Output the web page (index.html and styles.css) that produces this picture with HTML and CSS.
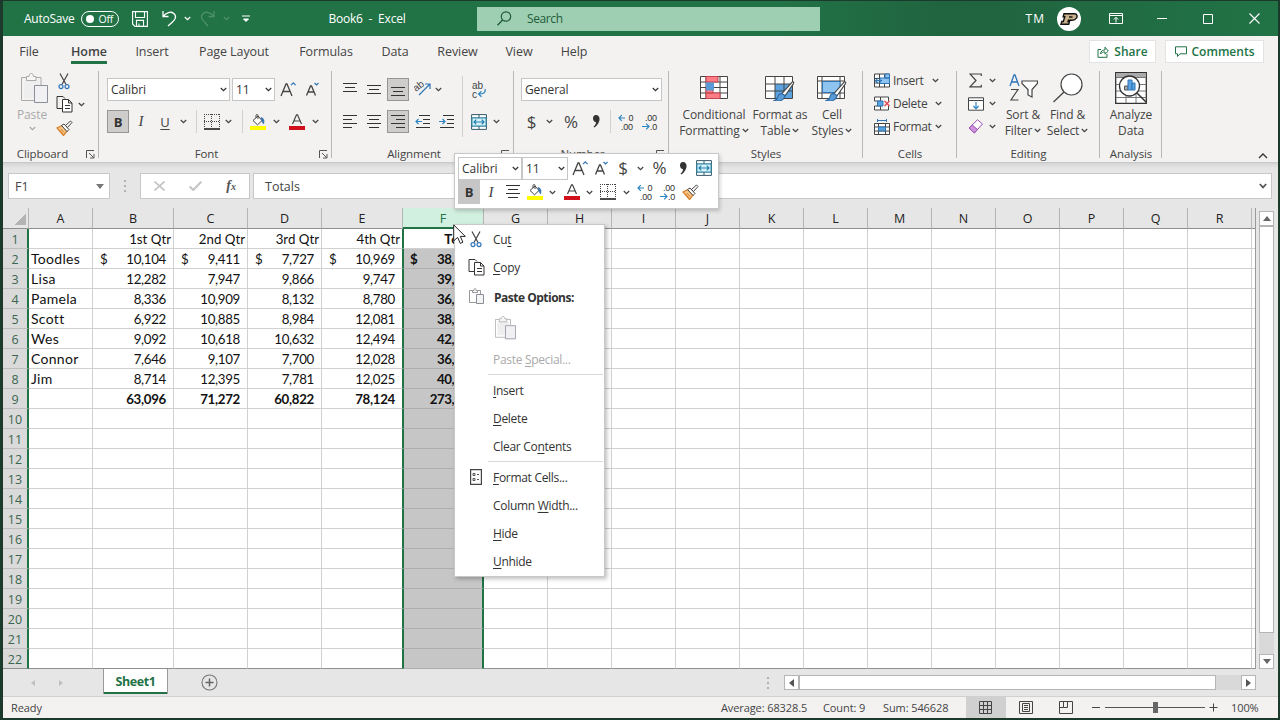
FILE: index.html
```
<!DOCTYPE html>
<html lang="en">
<head>
    <meta charset="UTF-8">
    <meta name="viewport" content="width=device-width, initial-scale=1.0">
    <title>Book6 - Excel</title>
    <link rel="stylesheet" href="styles.css">
</head>
<body>
    <!-- shared icons -->
    <svg class="sprite" width="0" height="0">
        <symbol id="chev" viewBox="0 0 7 5"><path d="M.8 1l2.7 2.6L6.2 1" fill="none" stroke="currentColor" stroke-width="1.3"/></symbol>
        <symbol id="cut" viewBox="0 0 12 17"><path d="M2 .5l6 11M10 .5l-6 11" fill="none" stroke="#444" stroke-width="1.2"/><circle cx="3" cy="13.6" r="2" fill="none" stroke="#2e75b6" stroke-width="1.2"/><circle cx="9" cy="13.6" r="2" fill="none" stroke="#2e75b6" stroke-width="1.2"/></symbol>
        <symbol id="copy" viewBox="0 0 17 17"><path d="M6 12.500H1V.5h6l2 2" fill="none" stroke="#333"/><path d="M6.500 3.500h6l3.500 3.500v9H6.500zM12.500 3.500V7H16M9 9.500h5M9 12.500h5" fill="#fff" stroke="#333"/></symbol>
        <symbol id="paste" viewBox="0 0 27 31"><path d="M13 27.500H.5V4.500h5M15 4.500h5V12" fill="none" stroke="#aaa"/><path d="M3 25h10V12h5V7H3z" fill="#eee"/><path d="M5.500 7.500v-4H8c0-4 4.500-4 4.500 0H15v4z" fill="#f6f6f6" stroke="#aaa"/><path d="M13.500 12.500h13v17h-13z" fill="#f1f1f4" stroke="#8a8f9a"/></symbol>
        <symbol id="paste-small" viewBox="0 0 15 17"><path d="M7 14.500H.5V2.500h3M8.500 2.500h3V6M3.500 4.500v-2h1.500c0-2.700 2-2.700 2 0h1.500v2z" fill="none" stroke="#999"/><path d="M7.500 6.500h7v9h-7z" fill="#f4f4f4" stroke="#8a8f9a"/></symbol>
        <symbol id="painter" viewBox="0 0 17 16"><path d="M1 8l5-2.500 5 5.500-3.500 4.500z" fill="#f7c78c" stroke="#d9822b" stroke-width="1.300"/><path d="M3 9.500l3.500 4M5 9l3 3.500" stroke="#d9822b"/><path d="M5.500 5.500L8 4l5 5.500-2 2z" fill="#fff" stroke="#444"/><path d="M9.500 5.500l5-4.500 1.500 1.500-4.500 5z" fill="#fff" stroke="#444"/></symbol>
        <symbol id="borders" viewBox="0 0 16 16"><path d="M0 .5h16M0 7.500h16M.5 0v14M7.500 0v14M15.500 0v14" fill="none" stroke="#444" stroke-dasharray="1 1"/><path d="M0 15h16" stroke="#111" stroke-width="1.500"/></symbol>
        <symbol id="fill" viewBox="0 0 17 16"><path d="M3 6.500L8 2l4 4.500-4.500 4.300z" fill="#fff" stroke="#444"/><path d="M6 4V1.500c0-1.300 2-1.300 2 0V5" fill="none" stroke="#444"/><path d="M11 3.500c3 .5 3.500 3.500 2.500 6.500-1.500-2-1.700-3.500-2.500-6.500z" fill="#2e75b6" stroke="#2e6a9e" stroke-width=".6"/><path d="M0 12h16v4H0z" fill="#ffff00"/></symbol>
        <symbol id="fontcolor" viewBox="0 0 16 16"><path d="M3.500 10L7.500.8h1L12.500 10M5 7h6" fill="none" stroke="#444" stroke-width="1.200"/><path d="M0 12h16v4H0z" fill="#d0111b"/></symbol>
        <symbol id="grow" viewBox="0 0 17 17"><path d="M1 15L6 3h1l5 12M3 10.500h7" fill="none" stroke="#444" stroke-width="1.300"/><path d="M11 4.200l2.300-2.400 2.300 2.400" fill="none" stroke="#2e75b6" stroke-width="1.200"/></symbol>
        <symbol id="shrink" viewBox="0 0 16 17"><path d="M1.500 14.500l4-9.500h1l4 9.500M3 11h6" fill="none" stroke="#444" stroke-width="1.300"/><path d="M9.500 2l2 2 2-2" fill="none" stroke="#2e75b6" stroke-width="1.200"/></symbol>
        <symbol id="lines-c" viewBox="0 0 14 14"><path d="M0 .5h14M2 4.500h10M0 8.500h14M2 12.500h10" stroke="#333"/></symbol>
        <symbol id="merge" viewBox="0 0 16 16"><path d="M.6.6h14.800v14.800H.6zM.6 4h14.800M.6 12h14.800M8 .6V4M8 12v3.400" fill="#fff" stroke="#345a6b"/><path d="M1 4h14v8H1z" fill="#d9f0f8" stroke="#2a8fae"/><path d="M3 8h10M5.300 5.700L3 8l2.300 2.300M10.700 5.700L13 8l-2.300 2.300" fill="none" stroke="#1b7fae" stroke-width="1.200"/></symbol>
        <symbol id="inc-dec" viewBox="0 0 16 18"><path d="M7 5H1M3.800 2.200L1 5l2.800 2.800" fill="none" stroke="#2e85c0" stroke-width="1.200"/><text x="10.500" y="8" class="tiny">0</text><text x="3" y="17" class="tiny">.00</text></symbol>
        <symbol id="dec-dec" viewBox="0 0 16 18"><path d="M0 13.500h7M4.200 10.700L7 13.500l-2.800 2.800" fill="none" stroke="#2e85c0" stroke-width="1.200"/><text x="3" y="8" class="tiny">.00</text><text x="8" y="17" class="tiny">.0</text></symbol>
        <symbol id="comma" viewBox="0 0 8 13"><path d="M4 0c5 0 5 8-1.500 12.500L1.500 11.500C3.500 10 4 8.500 4 7.200.5 7.200-.5.2 4 0z" fill="#333"/></symbol>
        <symbol id="launch" viewBox="0 0 9 9"><path d="M.5 8V.5H8M3 3l4.500 4.500M8 4v4H4" fill="none" stroke="#555"/></symbol>
        <symbol id="brush" viewBox="0 0 20 20"><path d="M8 12L18 .8c1.500-.3 1.500.7 1 1.700L11 14z" fill="#fff" stroke="#444"/><path d="M8 12c-2.500 0-3.500 1.500-4 3.500-.3 1.500-1.500 2.500-3.500 3 4 1.500 9.500.5 10.500-4.500z" fill="#5b9bd5" stroke="#2e6aa8"/></symbol>
    </svg>

    <div class="window">
        <div class="titlebar">
            <div class="quick">
                <span>AutoSave</span>
                <span class="toggle"><i></i>Off</span>
                <svg width="16" height="16"><path d="M.6.6h14.800v14.800H3L.6 13zM3.500.6v5.900h9V.6M4.500 15.400v-6h7v6M7 15v-2.500" fill="none" stroke="#fff" stroke-width="1.100"/></svg>
                <svg width="15" height="17"><path d="M1 1v5.500h5.500M1.300 6.200C4 2.500 9 1 11.800 3.500c3.500 3 1 6.500-1.300 8.500L6 16" fill="none" stroke="#fff" stroke-width="1.300"/></svg>
                <svg width="7" height="5"><use href="#chev"/></svg>
                <svg class="faint" width="15" height="17"><path d="M14 1v5.500H8.500M13.700 6.200C11 2.500 6 1 3.200 3.500c-3.500 3-1 6.500 1.300 8.500L8 16" fill="none" stroke="#fff" stroke-width="1.300"/></svg>
                <svg class="faint" width="7" height="5"><use href="#chev"/></svg>
                <svg width="8" height="8"><path d="M0 1h8M1.500 4L4 6.500 6.500 4z" fill="#fff" stroke="#fff"/></svg>
            </div>
            <div class="doc-name">Book6&nbsp; -&nbsp; Excel</div>
            <div class="search">
                <svg width="15" height="15"><circle cx="9" cy="5.500" r="4.700" fill="none" stroke="#1e5c3a" stroke-width="1.200"/><path d="M5.600 9L.5 14.300" stroke="#1e5c3a" stroke-width="1.300"/></svg>
                <span>Search</span>
            </div>
            <div class="controls">
                <span class="initials">TM</span>
                <span class="avatar"><svg width="18" height="12"><path d="M4 .8h10.500c3 0 3 2.700 2 4.200-1 1.700-2.500 2.200-4.500 2.200H8.500L8 8.500h1.500l-.8 2.700H1l.8-2.700h1.500l1.500-4.700H3.200z" fill="#c9b18c" stroke="#111" stroke-width="1.400"/><path d="M9 4h3.500" stroke="#111" stroke-width="1.400"/></svg></span>
                <svg width="14" height="11"><path d="M.5.500h13v10H.5zM.5 2.500h13M7 9.500v-5M4.800 6.500L7 4.300l2.200 2.200" fill="none" stroke="#fff"/></svg>
                <svg width="10" height="11"><path d="M0 5.500h10" stroke="#fff"/></svg>
                <svg width="10" height="10"><path d="M.5.500h9v9H.5z" fill="none" stroke="#fff"/></svg>
                <svg width="11" height="11"><path d="M.5.500l10 10M10.500.5l-10 10" stroke="#fff" stroke-width="1.100"/></svg>
            </div>
        </div>

        <div class="tabs">
            <span>File</span>
            <span class="active">Home</span>
            <span>Insert</span>
            <span>Page Layout</span>
            <span>Formulas</span>
            <span>Data</span>
            <span>Review</span>
            <span>View</span>
            <span>Help</span>
            <button class="share"><svg width="12" height="12"><path d="M4 3.500H1v7.800h9V8" fill="none" stroke="#217346"/><path d="M3.500 8c.3-3 2-4 4.500-4V1.200L11.300 5 8 8.200V6C6 6 4.700 6.500 3.500 8z" fill="none" stroke="#217346"/></svg>Share</button>
            <button class="comments"><svg width="12" height="12"><path d="M.5.800h11v7H5L2.500 10.500V7.800h-2z" fill="none" stroke="#217346"/></svg>Comments</button>
        </div>

        <div class="ribbon">
            <div class="group clipboard">
                <div class="body">
                    <div class="paste-btn">
                        <svg width="27" height="31"><use href="#paste"/></svg>
                        <span>Paste</span>
                        <svg width="7" height="5"><use href="#chev"/></svg>
                    </div>
                    <div class="clip-tools">
                        <svg width="12" height="17"><use href="#cut"/></svg><i></i>
                        <svg width="17" height="17"><use href="#copy"/></svg><svg width="7" height="5"><use href="#chev"/></svg>
                        <svg width="17" height="16"><use href="#painter"/></svg><i></i>
                    </div>
                </div>
                <div class="label">Clipboard<svg class="launch" width="9" height="9"><use href="#launch"/></svg></div>
            </div>

            <div class="group font">
                <div class="body rows">
                    <div class="font-row1">
                        <div class="select">Calibri<svg width="7" height="5"><use href="#chev"/></svg></div>
                        <div class="select size">11<svg width="7" height="5"><use href="#chev"/></svg></div>
                        <svg width="17" height="17"><use href="#grow"/></svg>
                        <svg width="16" height="17"><use href="#shrink"/></svg>
                    </div>
                    <div class="font-row2">
                        <span class="on bold">B</span>
                        <span class="italic">I</span>
                        <span class="under">U</span>
                        <svg width="7" height="5"><use href="#chev"/></svg>
                        <i class="sep"></i>
                        <svg width="16" height="16"><use href="#borders"/></svg>
                        <svg width="7" height="5"><use href="#chev"/></svg>
                        <i class="sep"></i>
                        <svg width="17" height="16"><use href="#fill"/></svg>
                        <svg width="7" height="5"><use href="#chev"/></svg>
                        <svg width="16" height="16"><use href="#fontcolor"/></svg>
                        <svg width="7" height="5"><use href="#chev"/></svg>
                    </div>
                </div>
                <div class="label">Font<svg class="launch" width="9" height="9"><use href="#launch"/></svg></div>
            </div>

            <div class="group align">
                <div class="body">
                    <div class="align-left">
                        <svg class="up" width="14" height="10"><path d="M0 .5h14M2 4.500h10M0 8.500h14" stroke="#333"/></svg>
                        <svg width="14" height="10"><path d="M0 .5h14M2 4.500h10M0 8.500h14" stroke="#333"/></svg>
                        <span class="on low"><svg width="14" height="10"><path d="M0 .5h14M2 4.500h10M0 8.500h14" stroke="#333"/></svg></span>
                        <svg class="up" width="17" height="17"><text x="0" y="11" class="ab" transform="rotate(-38 4 9)">ab</text><path d="M5 16L15.500 5.500M11 5h5v5" fill="none" stroke="#2e75b6" stroke-width="1.200"/></svg>
                        <svg width="7" height="5"><use href="#chev"/></svg>
                        <svg width="14" height="14"><path d="M0 .5h14M0 4.500h9M0 8.500h14M0 12.500h9" stroke="#333"/></svg>
                        <svg width="14" height="14"><use href="#lines-c"/></svg>
                        <span class="on"><svg width="14" height="14"><path d="M0 .5h14M5 4.500h9M0 8.500h14M5 12.500h9" stroke="#333"/></svg></span>
                        <svg width="15" height="14"><path d="M4 .5h11M8 4.500h7M8 8.500h7M1 12.500h14" stroke="#333"/><path d="M7 6.500H1M3.500 4L1 6.500 3.500 9" fill="none" stroke="#2e85c0" stroke-width="1.200"/></svg>
                        <svg class="wide" width="15" height="14"><path d="M4 .5h11M8 4.500h7M8 8.500h7M1 12.500h14" stroke="#333"/><path d="M0 6.500h6M3.500 4L6 6.500 3.500 9" fill="none" stroke="#2e85c0" stroke-width="1.200"/></svg>
                    </div>
                    <i class="sep tall"></i>
                    <div class="align-right">
                        <svg width="16" height="20"><text x="1" y="9" class="ab">ab</text><text x="1" y="18" class="ab">c</text><path d="M14 9c1 4-2 5-6 5M10.500 11.300L7.500 14l3 2.800" fill="none" stroke="#2e85c0" stroke-width="1.200"/></svg><i></i>
                        <svg width="16" height="16"><use href="#merge"/></svg>
                        <svg width="7" height="5"><use href="#chev"/></svg>
                    </div>
                </div>
                <div class="label">Alignment<svg class="launch" width="9" height="9"><use href="#launch"/></svg></div>
            </div>

            <div class="group number">
                <div class="body rows">
                    <div class="select">General<svg width="7" height="5"><use href="#chev"/></svg></div>
                    <div class="number-row2">
                        <span class="sym">$</span>
                        <svg width="7" height="5"><use href="#chev"/></svg>
                        <span class="sym">%</span>
                        <svg width="8" height="13"><use href="#comma"/></svg>
                        <i class="sep"></i>
                        <svg width="16" height="18"><use href="#inc-dec"/></svg>
                        <svg width="16" height="18"><use href="#dec-dec"/></svg>
                    </div>
                </div>
                <div class="label">Number<svg class="launch" width="9" height="9"><use href="#launch"/></svg></div>
            </div>

            <div class="group styles">
                <div class="body">
                    <div class="big">
                        <svg width="28" height="28"><path d="M.5 3.500h27v22H.5zM.5 9h27M.5 14.500h27M.5 20h27M6 3.500v22M20 3.500v22" fill="#fff" stroke="#444"/><path d="M6 3.500h12V9H6zM6 20h14v5.500H6zM6 14.500h7V20H6z" fill="#ff7b85" stroke="#c4464f"/><path d="M6 9.500h8v8H6z" fill="#5b9bd5"/></svg>
                        <span>Conditional</span>
                        <span>Formatting <svg width="7" height="5"><use href="#chev"/></svg></span>
                    </div>
                    <div class="big">
                        <svg width="30" height="28"><path d="M.5 3.500h27v22H.5z" fill="#fff"/><path d="M10 11h18v14H10z" fill="#5ba3e0"/><path d="M.5 3.500h27v22H.5zM.5 11h27M.5 18h27M10 3.500v22M19 3.500v22" fill="none" stroke="#444"/><use href="#brush" x="8" y="8" width="22" height="21"/></svg>
                        <span>Format as</span>
                        <span>Table <svg width="7" height="5"><use href="#chev"/></svg></span>
                    </div>
                    <div class="big">
                        <svg width="30" height="28"><path d="M.5 3.500h27v22H.5zM.5 8h27M.5 20h27M5 3.500v22M23 3.500v22" fill="#fff" stroke="#444"/><path d="M5.500 8.500h17.500v11H5.500z" fill="#8fc3f0" stroke="#2e75b6"/><use href="#brush" x="8" y="8" width="22" height="21"/></svg>
                        <span>Cell</span>
                        <span>Styles <svg width="7" height="5"><use href="#chev"/></svg></span>
                    </div>
                </div>
                <div class="label">Styles</div>
            </div>

            <div class="group cells">
                <div class="body list">
                    <div><svg width="16" height="15"><path d="M.5 1h15v13H.5zM.5 5.500h15M.5 10h15M5.500 1v13M10.500 1v13" fill="#fff" stroke="#444"/><path d="M6 5h9.500v5.500H6zM11 1h4.500v4H11z" fill="#8fc3f0" stroke="#2e75b6"/><path d="M8 7.700H1.500M4 5L1.500 7.700 4 10.400" fill="none" stroke="#2e75b6" stroke-width="1.200"/></svg><span>Insert</span><svg class="gap" width="7" height="5"><use href="#chev"/></svg></div>
                    <div><svg width="16" height="15"><path d="M.5 1h6v4h-6zM6.500 1h8v4M.5 10h6v4h-6zM6.500 14h8v-4" fill="#fff" stroke="#444"/><path d="M3.500 5h5.500v5H3.500z" fill="#5ba3e0" stroke="#2e75b6"/><path d="M10.500 5l5 5M15.500 5l-5 5" stroke="#e0444c" stroke-width="1.300"/></svg><span>Delete</span><svg class="gap" width="7" height="5"><use href="#chev"/></svg></div>
                    <div><svg width="16" height="16"><path d="M.5 4.500h15v11H.5zM.5 8h15M.5 12h15M4.500 4.500v11M11.500 4.500v11" fill="#fff" stroke="#444"/><path d="M4.500 8h7v4h-7z" fill="#5ba3e0" stroke="#2e75b6"/><path d="M3.500 0v3M12.500 0v3M3.500 1.500h9" stroke="#2e75b6"/></svg><span>Format</span><svg width="7" height="5"><use href="#chev"/></svg></div>
                </div>
                <div class="label">Cells</div>
            </div>

            <div class="group editing">
                <div class="body">
                    <div class="edit-tools">
                        <svg width="13" height="15"><path d="M12.300 3V1H1l6 6.500L1 13.800h11.300v-2" fill="none" stroke="#444" stroke-width="1.200"/></svg><svg width="7" height="5"><use href="#chev"/></svg>
                        <svg width="16" height="14"><path d="M.5.800h15v12.400H.5zM.5 3.500h15" fill="#fff" stroke="#444"/><path d="M8 5v6.500M5.300 9L8 11.600 10.700 9" fill="none" stroke="#2e85c0" stroke-width="1.200"/></svg><svg width="7" height="5"><use href="#chev"/></svg>
                        <svg width="16" height="15"><path d="M1 9L9.500.8l5 4.200L6.300 14z" fill="#fff" stroke="#9b4fb0"/><path d="M1 9l3.200-3 5.300 4.500L6.300 14z" fill="#cf93dd" stroke="#9b4fb0"/></svg><svg width="7" height="5"><use href="#chev"/></svg>
                    </div>
                    <div class="big sort">
                        <svg width="29" height="30"><path d="M1 13L5 2h1l4 11M2.500 9h6" fill="none" stroke="#2e75b6" stroke-width="1.300"/><path d="M2 16.500h7L2 27h7.500" fill="none" stroke="#444" stroke-width="1.200"/><path d="M13 8h15.500v2.500L23 16.500V24l-4-2v-5.500l-6-6z" fill="#fff" stroke="#444" stroke-width="1.200"/></svg>
                        <span>Sort &amp;</span>
                        <span>Filter <svg width="7" height="5"><use href="#chev"/></svg></span>
                    </div>
                    <div class="big find">
                        <svg width="30" height="30"><circle cx="18.500" cy="11.500" r="10.500" fill="#fff" stroke="#444" stroke-width="1.200"/><path d="M11 19L.5 29" stroke="#444" stroke-width="1.300"/></svg>
                        <span>Find &amp;</span>
                        <span>Select <svg width="7" height="5"><use href="#chev"/></svg></span>
                    </div>
                </div>
                <div class="label">Editing</div>
            </div>

            <div class="group analysis">
                <div class="body">
                    <div class="big">
                        <svg width="32" height="32"><path d="M.7.700h30.600v30.600H.7z" fill="#fff" stroke="#333" stroke-width="1.300"/><path d="M1 1h30v4H1z" fill="#aaa"/><path d="M1 5.500h30M1 12.500h30M1 19h30M1 25.500h30M11 19v12M21 19v12" stroke="#777"/><circle cx="14.500" cy="14" r="10" fill="#fff" stroke="#333" stroke-width="1.300"/><path d="M22 21l9 9" stroke="#333" stroke-width="1.500"/><path d="M9.500 14h3.500v4H9.500z" fill="#aaa" stroke="#555"/><path d="M13 8h4v10h-4z" fill="#5ba3e0" stroke="#2e75b6"/><path d="M17 11h3v7h-3z" fill="#5ba3e0" stroke="#2e75b6"/></svg>
                        <span>Analyze</span>
                        <span>Data</span>
                    </div>
                </div>
                <div class="label">Analysis</div>
            </div>

            <svg class="collapse" width="10" height="6"><path d="M1 5l4-4 4 4" fill="none" stroke="#333" stroke-width="1.300"/></svg>
        </div>

        <div class="formula-bar">
            <div class="name-box">F1<svg width="8" height="5"><path d="M0 0h8L4 5z" fill="#777"/></svg></div>
            <i class="dots"></i>
            <div class="fx-box">
                <svg width="11" height="10"><path d="M.5.500l10 9M10.500.5l-10 9" stroke="#c3c3c3" stroke-width="1.600"/></svg>
                <svg width="13" height="10"><path d="M.7 5.500l3.500 3.500L12.300.8" fill="none" stroke="#c3c3c3" stroke-width="2"/></svg>
                <span class="fx">f<small>x</small></span>
            </div>
            <div class="formula">Totals<svg width="8" height="6"><path d="M.8 1L4 4.400 7.200 1" fill="none" stroke="#555" stroke-width="1.700"/></svg></div>
        </div>

        <div class="sheet">
            <table class="grid">
                <thead><tr id="cols"></tr></thead>
                <tbody id="rows"></tbody>
            </table>
            <div class="vscroll">
                <span class="arrow"><svg width="8" height="5"><path d="M0 5h8L4 0z" fill="#666"/></svg></span>
                <span class="thumb"></span>
                <span class="arrow"><svg width="8" height="5"><path d="M0 0h8L4 5z" fill="#666"/></svg></span>
            </div>
        </div>

        <div class="sheet-tabs">
            <svg width="4" height="6"><path d="M4 0v6L0 3z" fill="#c0c0c0"/></svg>
            <svg width="4" height="6"><path d="M0 0v6l4-3z" fill="#c0c0c0"/></svg>
            <span class="sheet-tab">Sheet1</span>
            <svg width="17" height="17"><circle cx="8.500" cy="8.500" r="7.500" fill="none" stroke="#777" stroke-width="1.100"/><path d="M4.500 8.500h8M8.500 4.500v8" stroke="#666" stroke-width="1.500"/></svg>
            <i class="dots"></i>
            <div class="hscroll">
                <span class="arrow"><svg width="5" height="8"><path d="M5 0v8L0 4z" fill="#555"/></svg></span>
                <span class="thumb"></span>
                <span class="arrow"><svg width="5" height="8"><path d="M0 0v8l5-4z" fill="#555"/></svg></span>
            </div>
        </div>

        <div class="status">
            <span class="ready">Ready</span>
            <span class="avg">Average: 68328.5</span>
            <span class="count">Count: 9</span>
            <span class="sum">Sum: 546628</span>
            <span class="view current"><svg width="13" height="13"><path d="M.5.500h12v12H.5zM.5 4.500h12M.5 8.500h12M4.500.5v12M8.500.5v12" fill="none" stroke="#444"/></svg></span>
            <span class="view"><svg width="14" height="13"><path d="M.5.500h13v12H.5zM3.500 2.500h7v8h-7zM5 4.500h4M5 6.500h4M5 8.500h4" fill="none" stroke="#444"/></svg></span>
            <span class="view"><svg width="14" height="13"><path d="M.5.500h13v12H.5zM4.500.5v6h-4M4.500 6.500h4v-6" fill="none" stroke="#444"/></svg></span>
            <svg class="minus" width="9" height="9"><path d="M0 4.500h8" stroke="#444"/></svg>
            <span class="slider"><i></i></span>
            <svg class="plus" width="9" height="9"><path d="M.5 4.500h8M4.500.5v8" stroke="#444"/></svg>
            <span class="zoom">100%</span>
        </div>

        <div class="mini">
            <div class="mini-row1">
                <div class="select">Calibri<svg width="7" height="5"><use href="#chev"/></svg></div>
                <div class="select">11<svg width="7" height="5"><use href="#chev"/></svg></div>
                <svg width="17" height="17"><use href="#grow"/></svg>
                <svg width="16" height="17"><use href="#shrink"/></svg>
                <span class="sym">$</span>
                <svg width="7" height="5"><use href="#chev"/></svg>
                <span class="sym">%</span>
                <svg width="8" height="13"><use href="#comma"/></svg>
                <svg width="16" height="16"><use href="#merge"/></svg>
            </div>
            <div class="mini-row2">
                <span class="on bold">B</span>
                <span class="italic">I</span>
                <svg width="14" height="14"><use href="#lines-c"/></svg>
                <svg width="17" height="16"><use href="#fill"/></svg>
                <svg width="7" height="5"><use href="#chev"/></svg>
                <svg width="16" height="16"><use href="#fontcolor"/></svg>
                <svg width="7" height="5"><use href="#chev"/></svg>
                <svg width="16" height="16"><use href="#borders"/></svg>
                <svg width="7" height="5"><use href="#chev"/></svg>
                <svg width="16" height="18"><use href="#inc-dec"/></svg>
                <svg width="16" height="18"><use href="#dec-dec"/></svg>
                <svg width="17" height="16"><use href="#painter"/></svg>
            </div>
        </div>

        <div class="menu">
            <div class="item"><svg width="12" height="17"><use href="#cut"/></svg><span>Cu<u>t</u></span></div>
            <div class="item"><svg width="17" height="17"><use href="#copy"/></svg><span><u>C</u>opy</span></div>
            <div class="item head"><svg width="15" height="17"><use href="#paste-small"/></svg><b>Paste Options:</b></div>
            <div class="item paste-icon"><i></i><svg width="21" height="24"><use href="#paste"/></svg></div>
            <div class="item off"><i></i><span>Paste <u>S</u>pecial...</span></div>
            <div class="line"></div>
            <div class="item"><i></i><span><u>I</u>nsert</span></div>
            <div class="item"><i></i><span><u>D</u>elete</span></div>
            <div class="item"><i></i><span>Clear Co<u>n</u>tents</span></div>
            <div class="line"></div>
            <div class="item"><svg width="12" height="16"><path d="M.6.600h10.800v14.800H.6z" fill="#fff" stroke="#444" stroke-width="1.200"/><path d="M3 4.500h2v2H3zM3 9.500h2v2H3zM7 5.500h2M7 10.500h2" fill="none" stroke="#555"/></svg><span><u>F</u>ormat Cells...</span></div>
            <div class="item"><i></i><span>Column <u>W</u>idth...</span></div>
            <div class="item"><i></i><span><u>H</u>ide</span></div>
            <div class="item"><i></i><span><u>U</u>nhide</span></div>
        </div>

        <svg class="cursor" width="13" height="21"><path d="M.7.900v16l3.900-3.500 2.700 6 2.600-1.200-2.600-5.800h5z" fill="#fff" stroke="#222"/></svg>
    </div>

    <script>
        const widths = { A: 64, B: 81, C: 74, D: 74, E: 81, F: 81 };
        const cols = 'ABCDEFGHIJKLMNOPQR'.split('');
        const data = [
            ['', '1st Qtr', '2nd Qtr', '3rd Qtr', '4th Qtr', 'Totals'],
            ['Toodles', '10,104', '9,411', '7,727', '10,969', '38,211'],
            ['Lisa', '12,282', '7,947', '9,866', '9,747', '39,842'],
            ['Pamela', '8,336', '10,909', '8,132', '8,780', '36,157'],
            ['Scott', '6,922', '10,885', '8,984', '12,081', '38,872'],
            ['Wes', '9,092', '10,618', '10,632', '12,494', '42,836'],
            ['Connor', '7,646', '9,107', '7,700', '12,028', '36,481'],
            ['Jim', '8,714', '12,395', '7,781', '12,025', '40,915'],
            ['', '63,096', '71,272', '60,822', '78,124', '273,314']
        ];

        let head = '<th class="corner"></th>';
        cols.forEach(c => {
            head += `<th class="${c === 'F' ? 'picked' : ''}" style="width: ${widths[c] || 64}px">${c}</th>`;
        });
        document.getElementById('cols').innerHTML = head + '<th class="rest"></th>';

        let body = '';
        for (let r = 0; r < 22; r++) {
            body += `<tr><th>${r + 1}</th>`;
            cols.forEach((c, i) => {
                const text = (data[r] && data[r][i]) || '';
                const cls = ['col-' + c.toLowerCase()];
                if (i > 0) cls.push(r === 0 ? 'title' : 'num');
                if (r === 8 || i === 5) cls.push('strong');
                const sign = r === 1 && i > 0 && text ? '<span class="sign">$</span>' : '';
                body += `<td class="${cls.join(' ')}">${sign}${text}</td>`;
            });
            body += '<td class="rest"></td></tr>';
        }
        document.getElementById('rows').innerHTML = body;
    </script>
</body>
</html>
```
FILE: styles.css
```
* {
    margin: 0;
    padding: 0;
    box-sizing: border-box;
}

body {
    width: 1280px;
    height: 720px;
    overflow: hidden;
    background: #1c3a2b;
    font-family: "Open Sans", "Noto Sans", sans-serif;
    font-size: 12px;
    color: #444;
}

.sprite {
    position: absolute;
}

svg {
    display: block;
    flex-shrink: 0;
}

.tiny {
    font-family: "Liberation Sans", sans-serif;
    font-size: 9px;
    letter-spacing: -0.3px;
    fill: #333;
}

.ab {
    font-family: "Liberation Sans", sans-serif;
    font-size: 10px;
    fill: #444;
}

.window {
    position: relative;
    width: 1275px;
    height: 717px;
    margin: 1px 2px 2px 3px;
    background: #e6e6e6;
    display: flex;
    flex-direction: column;
}

/* title bar */
.titlebar {
    height: 35px;
    display: grid;
    grid-template-columns: 300px 128px 43px 343px 1fr;
    align-items: center;
    background: linear-gradient(90deg, #217346 0%, #217346 60%, #20633f 75%, #217346 100%);
    color: #fff;
}

.quick {
    display: grid;
    grid-template-columns: 57px 51px 30px 22px 16px 23px 19px 10px;
    padding-left: 21px;
    align-items: center;
    justify-items: start;
    letter-spacing: -0.25px;
}

.faint {
    opacity: 0.2;
}

.toggle {
    width: 38px;
    height: 16px;
    border: 1px solid #fff;
    border-radius: 8px;
    display: flex;
    align-items: center;
    justify-content: space-between;
    padding: 0 5px 0 4px;
    font-size: 10.5px;
}

.toggle i {
    width: 8px;
    height: 8px;
    border-radius: 50%;
    background: #fff;
}

.doc-name {
    text-align: center;
    letter-spacing: -0.2px;
}

.search {
    grid-column: 4;
    height: 24px;
    margin-left: 3px;
    margin-right: -3px;
    padding-left: 20px;
    display: flex;
    align-items: center;
    gap: 15px;
    background: #9fcfb2;
    color: #1e5c3a;
    letter-spacing: -0.4px;
}

.controls {
    display: grid;
    grid-template-columns: 26px 48px 46px 46px 46px 46px;
    justify-content: end;
    align-items: center;
    justify-items: center;
    padding-right: 1px;
}

.initials {
    justify-self: end;
    letter-spacing: 1px;
}

.avatar {
    width: 24px;
    height: 24px;
    border-radius: 50%;
    background: #fff;
    display: flex;
    align-items: center;
    justify-content: center;
}

/* ribbon tabs */
.tabs {
    height: 30px;
    display: grid;
    grid-template-columns: 52px 68px 58px 106px 78px 60px 65px 58px 52px 1fr 112px;
    background: #f3f2f1;
    font-size: 12.5px;
    text-align: center;
    line-height: 31px;
    letter-spacing: -0.08px;
}

.tabs .active {
    justify-self: center;
    height: 28px;
    font-weight: 600;
    letter-spacing: 0;
    border-bottom: 3px solid #217346;
}

.tabs button {
    height: 23px;
    margin-top: 4px;
    border: 1px solid #e3e3e3;
    background: #fff;
    color: #217346;
    font-family: inherit;
    font-size: 12px;
    font-weight: 600;
    display: flex;
    align-items: center;
    justify-content: center;
    gap: 5px;
}

.share {
    width: 67px;
    justify-self: end;
    margin-right: 10px;
}

.comments {
    width: 99px;
    margin-left: -1px;
}

/* ribbon */
.ribbon {
    height: 97px;
    display: flex;
    background: #f3f2f1;
    border-bottom: 1px solid #c8c8c8;
    letter-spacing: -0.1px;
}

.group {
    height: 97px;
    display: flex;
    flex-direction: column;
    background: linear-gradient(#b8b8b8, #b8b8b8) no-repeat right 5px / 1px 87px;
}

.group .body {
    height: 79px;
    display: flex;
}

.label {
    height: 18px;
    line-height: 18px;
    position: relative;
    text-align: center;
    font-size: 11.5px;
}

.launch {
    position: absolute;
    right: 4px;
    top: 5px;
}

.clipboard { width: 96px; }
.font { width: 233px; }
.align { width: 182px; }
.number { width: 155px; }
.styles { width: 194px; }
.cells { width: 94px; }
.editing { width: 143px; }
.analysis { width: 62px; }

.clipboard .label {
    padding-right: 17px;
}

.font .label,
.align .label,
.number .label {
    padding-right: 18px;
}

.paste-btn {
    width: 50px;
    padding: 7px 0 0 8px;
    display: flex;
    flex-direction: column;
    align-items: center;
    color: #aaa;
    line-height: 22px;
}

.paste-btn > :first-child {
    margin-left: 4px;
}

.clip-tools {
    display: grid;
    grid-template-columns: 22px 12px;
    grid-template-rows: 24px 23px 23px;
    margin-top: 3px;
    align-items: center;
    justify-items: center;
}

.rows {
    flex-direction: column;
    padding: 12px 0 0 8px;
    gap: 9px;
}

.select {
    height: 23px;
    display: flex;
    align-items: center;
    justify-content: space-between;
    padding: 0 2px 0 3px;
    background: #fff;
    border: 1px solid #c6c6c6;
    color: #333;
}

.font-row1 {
    display: grid;
    grid-template-columns: 125px 44px 24px 26px;
    align-items: center;
    justify-items: center;
}

.font-row1 .select {
    width: 123px;
    justify-self: start;
}

.font-row1 .size {
    width: 43px;
}

.font-row2 {
    height: 23px;
    display: grid;
    grid-template-columns: 22px 24px 24px 12px 15px 15px 19px 8px 25px 11px 30px 7px;
    align-items: center;
    justify-items: center;
    font-size: 13px;
}

.on {
    width: 22px;
    height: 23px;
    display: flex;
    align-items: center;
    justify-content: center;
    background: #cfcdcb;
    border: 1px solid #979593;
}

.bold {
    font-weight: 700;
    color: #333;
}

.italic {
    font-family: "Liberation Serif", serif;
    font-style: italic;
    font-size: 15px;
}

.under {
    text-decoration: underline;
    text-underline-offset: 2px;
}

.sep {
    width: 1px;
    height: 23px;
    background: #d0d0d0;
}

.sep.tall {
    height: 61px;
    margin-top: 10px;
}

.align-left {
    width: 130px;
    padding-left: 6px;
    display: grid;
    grid-template-columns: 24px 24px 24px 25px 6px;
    grid-template-rows: 23px 23px;
    row-gap: 9px;
    margin-top: 12px;
    align-items: center;
    justify-items: center;
}

.align-left .up {
    margin-top: -4px;
}

.align-left .low {
    align-items: flex-end;
    padding-bottom: 3px;
}

.align-left .wide {
    margin-left: 16px;
}

.align-right {
    display: grid;
    grid-template-columns: 31px 4px;
    grid-template-rows: 23px 23px;
    row-gap: 9px;
    margin-top: 12px;
    align-items: center;
    justify-items: center;
}

.number .body {
    padding-left: 7px;
}

.number .select {
    width: 141px;
}

.number-row2 {
    height: 23px;
    display: grid;
    grid-template-columns: 21px 14px 30px 19px 10px 22px 26px;
    align-items: center;
    justify-items: center;
}

.sym {
    font-size: 17px;
    line-height: 20px;
}

.big {
    display: flex;
    flex-direction: column;
    align-items: center;
    padding-top: 7px;
    line-height: 16px;
    white-space: nowrap;
}

.big > svg {
    margin-bottom: 6px;
}

.big > svg[height="30"] {
    margin-bottom: 4px;
}

.big span svg {
    display: inline-block;
    vertical-align: 2px;
    margin-left: -1px;
}

.styles .body {
    display: grid;
    grid-template-columns: 74px 58px 46px;
    padding-left: 8px;
}

.list {
    flex-direction: column;
    padding: 3px 0 0 11px;
}

.list div {
    height: 23px;
    display: flex;
    align-items: center;
    gap: 3px;
}

.list span {
    letter-spacing: -0.3px;
}

.list .gap {
    margin-left: 5px;
}

.edit-tools {
    display: grid;
    grid-template-columns: 23px 10px;
    grid-template-rows: 23px 23px 23px;
    padding: 3px 1px 0 7px;
    align-items: center;
    justify-items: center;
}

.big.sort {
    width: 46px;
    margin-left: 2px;
}

.big.find {
    width: 43px;
}

.analysis .big {
    width: 62px;
    padding-top: 6px;
}

.analysis .big > svg {
    margin-bottom: 3px;
}

.collapse {
    margin: 87px 0 0 96px;
}

/* formula bar */
.formula-bar {
    height: 45px;
    display: flex;
    padding: 10px 0 0 5px;
    background: linear-gradient(#d4d4d4, #e6e6e6 5px);
    font-size: 12.5px;
}

.formula-bar > div {
    height: 26px;
    background: #fff;
    border: 1px solid #c8c8c8;
    display: flex;
    align-items: center;
    justify-content: space-between;
}

.name-box {
    width: 102px;
    padding: 0 5px 0 6px;
}

.dots {
    width: 2px;
    height: 12px;
    background: repeating-linear-gradient(#b0b0b0 0 2px, transparent 2px 5px);
}

.formula-bar .dots {
    margin: 7px 14px 0;
}

.fx-box {
    width: 110px;
    padding: 0 13px 0 13px;
}

.fx {
    font-family: "Liberation Serif", serif;
    font-style: italic;
    font-weight: 700;
    font-size: 14px;
    color: #555;
}

.fx small {
    font-size: 10px;
}

.formula {
    width: 1019px;
    margin-left: 3px;
    padding: 0 4px 0 11px;
}

/* grid */
.sheet {
    height: 461px;
    display: flex;
}

.grid {
    width: 1253px;
    table-layout: fixed;
    border-collapse: separate;
    border-spacing: 0;
    font-family: Lato, sans-serif;
    font-size: 13.3px;
    color: #111;
    border-right: 1px solid #999;
}

.grid tr {
    height: 20px;
}

.grid th {
    height: 20px;
    line-height: 19px;
    font-family: "Open Sans", sans-serif;
    font-weight: 400;
    font-size: 12.5px;
    border-right: 1px solid #b5b5b5;
    border-bottom: 1px solid #8f8f8f;
    background: #e6e6e6;
}

.grid thead th {
    height: 21px;
    padding-top: 1px;
    color: #222;
}

.grid thead .corner {
    width: 26px;
    background: linear-gradient(135deg, transparent 50%, #b4b4b4 50%) no-repeat 11px 5px / 12px 12px #e6e6e6;
}

.grid thead .picked {
    background: #d2f0e0;
    color: #217346;
    box-shadow: inset 0 -1px #217346;
    border-bottom: 1px solid #217346;
}

.grid tbody th {
    padding-top: 2px;
    line-height: 17px;
    background: #dadada;
    color: #3a6650;
    border-right: 2px solid #217346;
    border-bottom-color: #bdbdbd;
}

.grid td {
    height: 20px;
    line-height: 17px;
    background: #fff;
    border-right: 1px solid #d0d0d0;
    border-bottom: 1px solid #d0d0d0;
    padding: 2px 0 0 2px;
    white-space: nowrap;
    overflow: hidden;
}

.grid .rest {
    border-right: none;
}

.grid tbody tr:last-child > * {
    border-bottom-color: #8f8f8f;
}

.grid .col-a {
    font-size: 14px;
    letter-spacing: 0.3px;
    padding-top: 0;
    padding-bottom: 1px;
}

.grid .title {
    text-align: right;
    padding-right: 2px;
}

.grid .num {
    text-align: right;
    padding-right: 7px;
    letter-spacing: -0.3px;
}

.grid .strong {
    font-weight: 700;
}

.grid .col-e {
    border-right: 1px solid #217346;
}

.grid .col-f {
    border-left: 1px solid #217346;
    border-right: 2px solid #217346;
}

.grid .col-f.title {
    padding-right: 0;
    letter-spacing: 0.5px;
}

.grid .col-f.num {
    background: #c6c6c6;
    border-bottom-color: #aeaeae;
    padding-right: 6px;
    letter-spacing: -0.45px;
}

.sign {
    float: left;
    margin-left: 5px;
}

.col-f .sign {
    margin-left: 4px;
}

.arrow {
    width: 15px;
    height: 15px;
    display: flex;
    align-items: center;
    justify-content: center;
    background: #fff;
    border: 1px solid #b5b5b5;
}

.thumb {
    background: #fff;
    border: 1px solid #b5b5b5;
}

.vscroll {
    width: 15px;
    height: 458px;
    margin: 3px 0 0 3px;
    background: #d9d9d9;
    display: flex;
    flex-direction: column;
}

.vscroll .thumb {
    height: 407px;
    margin-bottom: auto;
}

/* sheet tabs */
.sheet-tabs {
    height: 28px;
    display: flex;
    align-items: center;
    padding: 0 0 0 28px;
    border-bottom: 1px solid #d0d0d0;
}

.sheet-tabs > svg + svg {
    margin-left: 24px;
}

.sheet-tab {
    width: 65px;
    height: 25px;
    margin: -3px 33px 0 40px;
    background: #fff;
    border: solid #999;
    border-width: 0 1px;
    box-shadow: inset 0 -2px #217346;
    color: #217346;
    font-weight: 700;
    font-size: 12.5px;
    line-height: 26px;
    text-align: center;
    letter-spacing: -0.4px;
}

.sheet-tabs .dots {
    margin-left: 549px;
}

.hscroll {
    width: 472px;
    margin-left: 15px;
    display: flex;
    background: #d9d9d9;
}

.hscroll .thumb {
    width: 417px;
    margin-right: auto;
}

/* status bar */
.status {
    height: 21px;
    display: grid;
    grid-template-columns: 718px 102px 60px 83px 40px 40px 40px 19px 100px 5px 1fr;
    align-items: center;
    background: #f3f2f1;
    font-size: 11px;
    letter-spacing: -0.1px;
    white-space: nowrap;
}

.ready {
    padding-left: 8px;
}

.view {
    height: 21px;
    display: flex;
    align-items: center;
    justify-content: center;
}

.view.current {
    padding-right: 1px;
    background: #d0d0d0;
}

.minus {
    margin-left: 6px;
}

.slider {
    height: 1px;
    background: #555;
    display: flex;
    justify-content: center;
    align-items: center;
}

.slider i {
    width: 5px;
    height: 11px;
    background: #666;
}

.plus {
    margin-left: 4px;
}

.zoom {
    padding-left: 21px;
}

/* floating mini toolbar */
.mini {
    position: absolute;
    left: 451px;
    top: 152px;
    width: 265px;
    height: 56px;
    padding: 2px 0 0 3px;
    background: #fff;
    border: 1px solid #c8c8c8;
    box-shadow: 1px 2px 4px rgba(0, 0, 0, 0.2);
}

.mini-row1,
.mini-row2 {
    height: 24px;
    display: grid;
    align-items: center;
    justify-items: center;
}

.mini-row1 {
    grid-template-columns: 64px 46px 24px 20px 22px 12px 27px 20px 22px;
}

.mini-row1 .select {
    width: 100%;
}

.mini-row2 {
    grid-template-columns: 22px 22px 22px 23px 11px 27px 8px 30px 6px 32px 14px 30px;
}

.mini .on {
    height: 24px;
    border: none;
    background: #c6c6c6;
    font-size: 13px;
}

/* context menu */
.menu {
    position: absolute;
    left: 451px;
    top: 223px;
    width: 151px;
    height: 353px;
    background: #fff;
    border: 1px solid #c8c8c8;
    box-shadow: 2px 2px 4px rgba(0, 0, 0, 0.25);
    color: #333;
    letter-spacing: -0.3px;
}

.item {
    height: 28px;
    display: grid;
    grid-template-columns: 42px 1fr;
    align-items: center;
}

.item > :first-child {
    justify-self: center;
}

.item > :last-child {
    margin-left: -4px;
}

.item u {
    text-underline-offset: 2px;
}

.item.head {
    height: 31px;
    letter-spacing: -0.5px;
}

.item.head b {
    margin: 2px 0 0 -3px;
}

.item.paste-icon {
    height: 33px;
    padding-bottom: 2px;
}

.item.paste-icon svg {
    margin-left: -2px;
}

.item.off {
    height: 28px;
    color: #aaa;
}

.line {
    height: 1px;
    margin: 1px 1px 1px 33px;
    background: #d8d8d8;
}

.cursor {
    position: absolute;
    left: 450px;
    top: 223px;
}
```
